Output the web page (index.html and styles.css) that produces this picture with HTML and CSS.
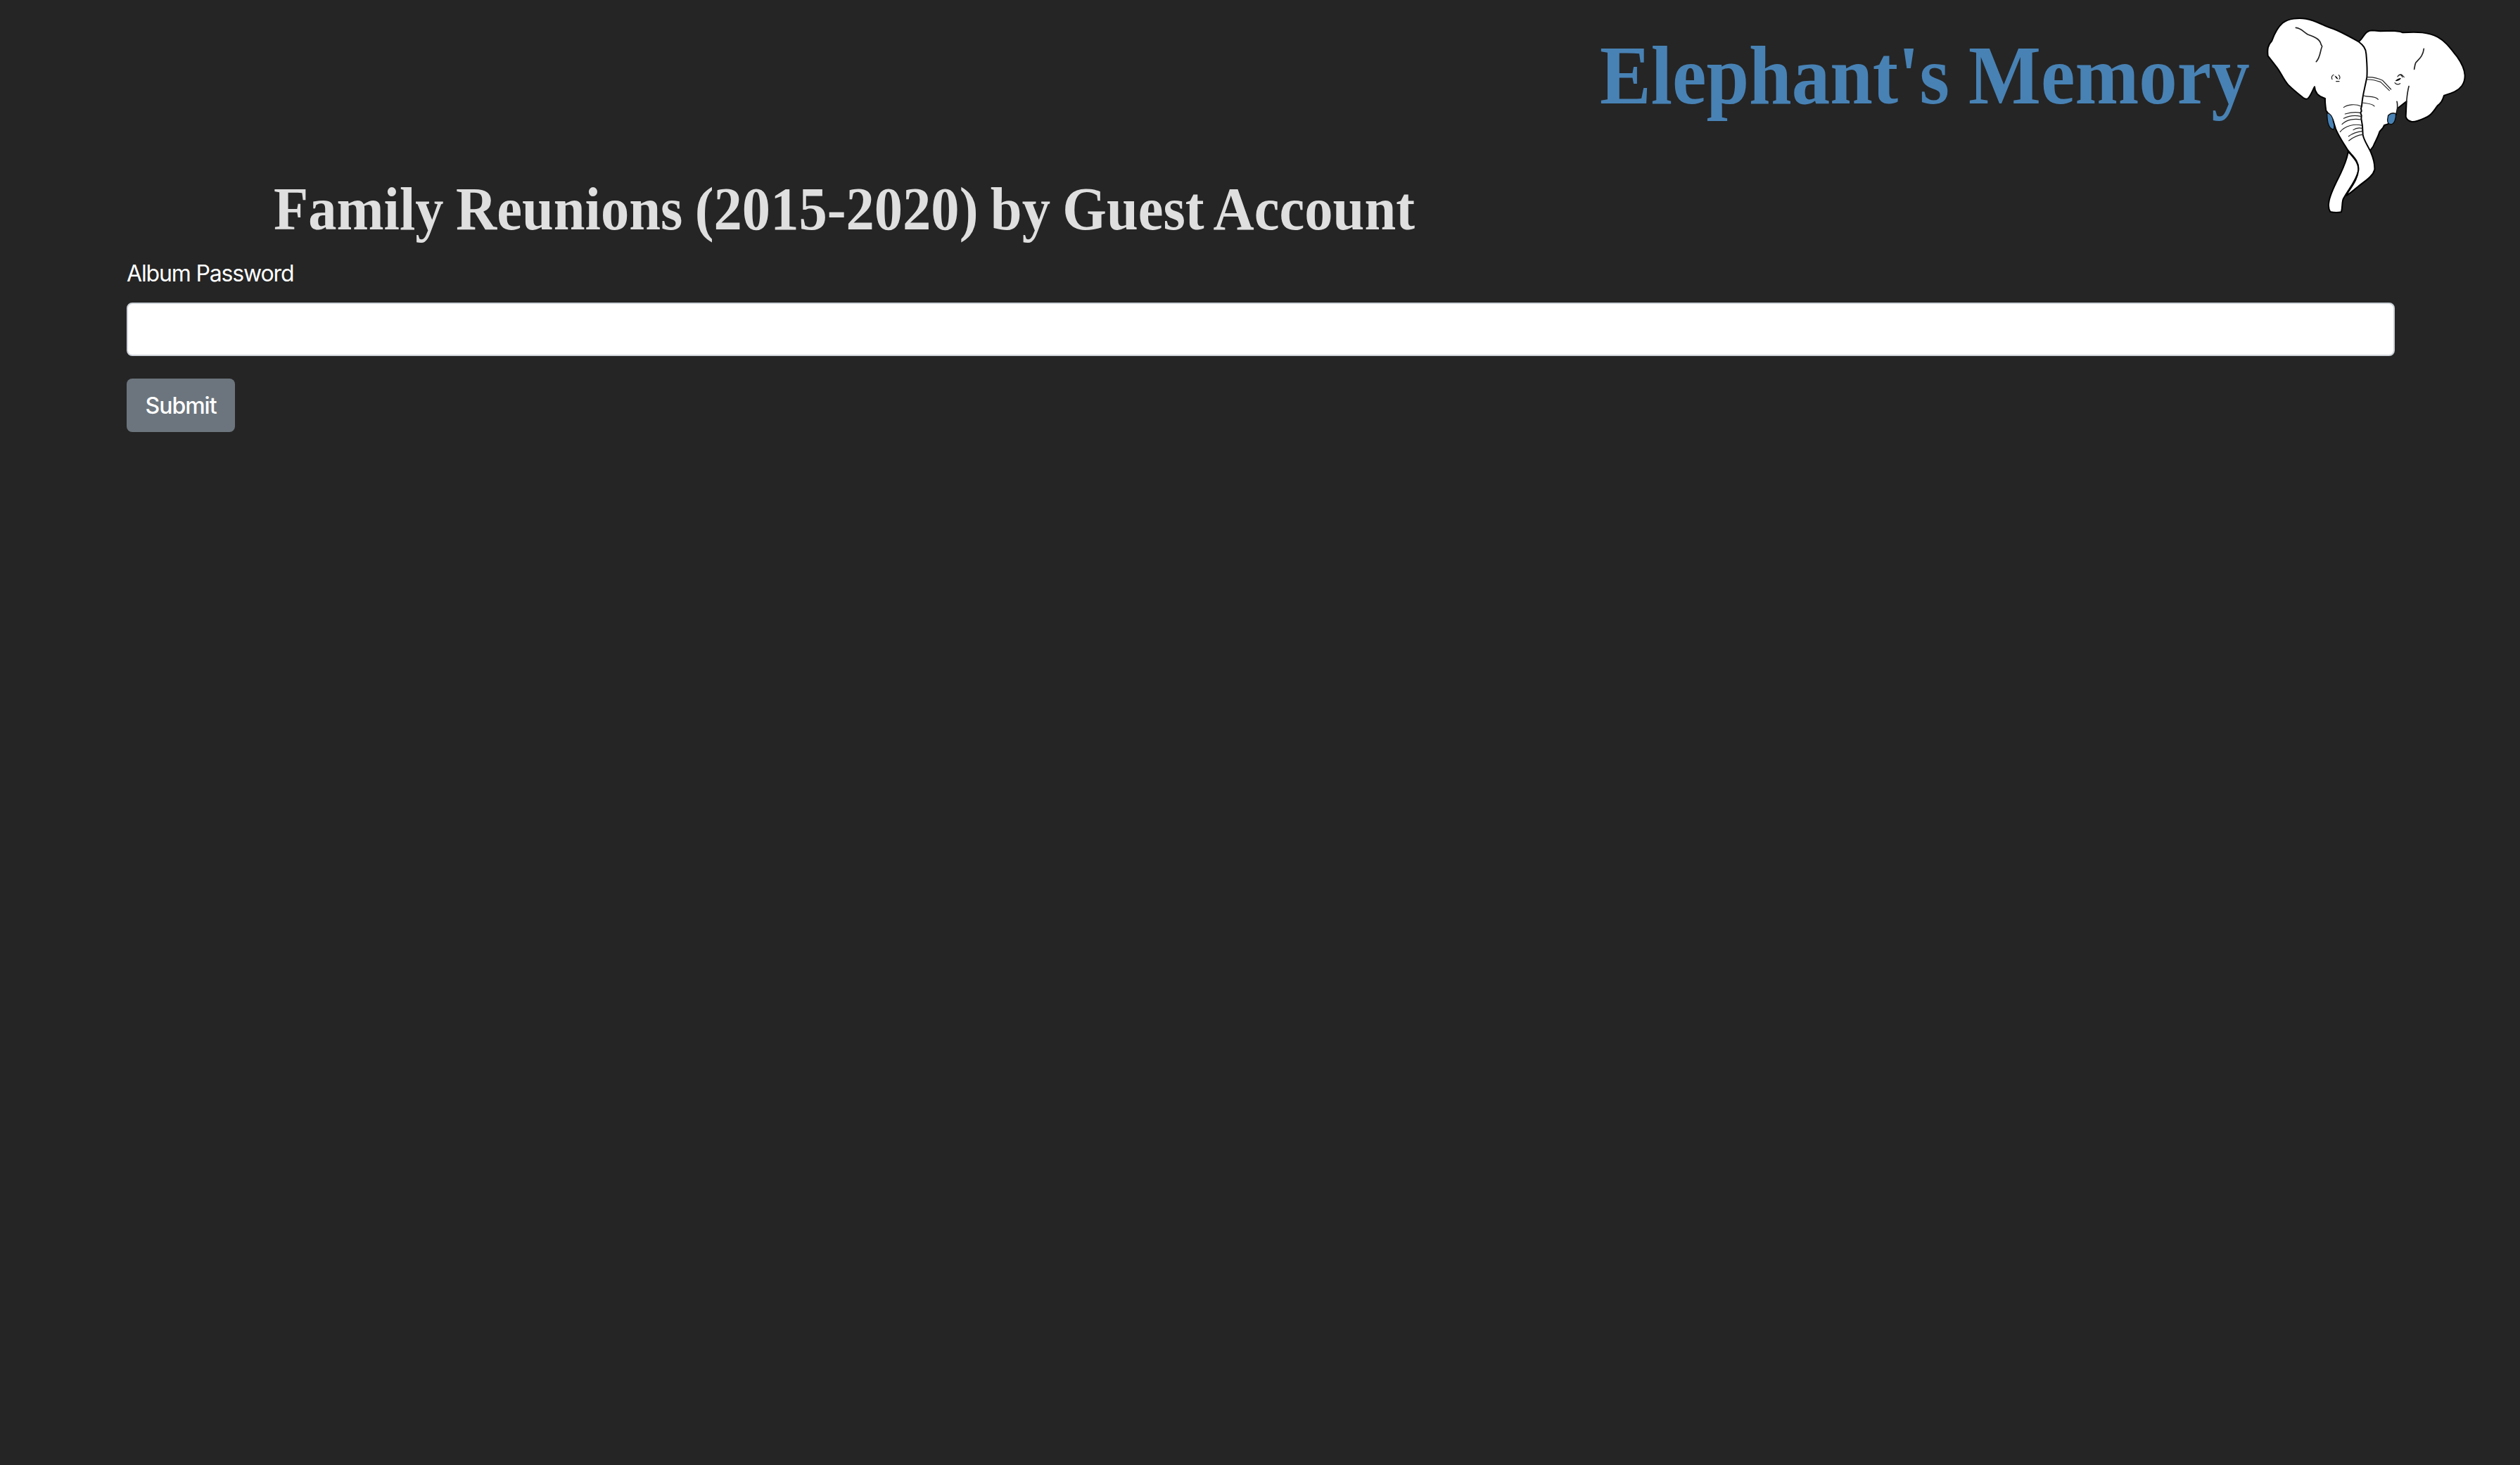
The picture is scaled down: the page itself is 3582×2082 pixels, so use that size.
FILE: index.html
```html
<!DOCTYPE html>
<html lang="en">
<head>
<meta charset="utf-8">
<title>Elephant's Memory</title>
<link rel="stylesheet" href="styles.css">
</head>
<body>
<header class="masthead">
  <div class="brand">Elephant's Memory</div>
  <svg class="logo" viewBox="0 0 930 900" aria-hidden="true">
    <g class="shape">
      <path d="M428 148C443 138 448 120 462 108Q472 100 488 100L520 103L575 101L606 105L616 109C680 105 725 107 765 128C800 147 822 180 848 212C868 240 880 265 881 292C881 312 879 322 868 336C850 360 825 367 792 377C785 400 780 408 764 421C750 440 740 459 721 468C700 477 675 491 655 489Q633 484 629 467L632 402L594 432L588 458L552 499L537 504C531 522 520 526 517 532C511 555 497 575 490 594L477 612L420 540L420 250Z"/>
      <path d="M496 693C488 725 450 744 426 765C406 780 391 796 373 804C396 770 423 735 427 696Z"/>
      <path d="M383 620C374 665 360 690 344 724C325 762 305 800 301 832C298 848 300 862 307 873Q330 878 354 874C360 850 356 830 363 817C385 775 420 739 427 696C431 665 405 642 383 615Z"/>
      <path d="M41 208C38 180 40 163 58 144C70 110 84 85 105 67C130 49 170 45 203 50C248 57 275 80 320 93C355 106 390 127 428 148C447 163 459 176 460 200C464 245 465 275 463 299C456 340 444 375 441 422L438 432L440 444L436 451L440 462L439 476L444 506L446 545C452 574 470 595 481 622C493 650 497 670 496 693C488 725 450 744 426 765C406 780 391 796 373 804C396 770 423 735 427 696C431 656 402 635 383 612C365 582 343 552 330 519L318 480L289 441C286 420 284 405 285 390C262 383 241 368 240 340C230 358 221 383 211 390Q203 395 192 387C165 366 145 349 128 332C108 311 96 277 76 253Z"/>
    </g>
    <g class="line">
      <path d="M160 88C185 91 190 105 211 117C235 126 262 134 267 158L272 168C264 184 265 215 247 233"/>
      <path d="M706 178C702 211 685 221 671 238C668 245 667 254 665 265"/>
      <path d="M642 338C635 364 634 385 632 405M591 403C595 414 593 421 592 455"/>
    </g>
    <g class="fine">
      <path d="M465 299C490 298 512 304 530 313L566 351M463 309C490 308 508 315 522 320L559 356"/>
      <path d="M448 376C452 386 499 376 511 394M444 408C463 411 489 412 495 423"/>
      <path d="M364 428C380 415 415 412 438 423M370 456C390 450 410 445 436 451M364 475C385 464 410 460 437 466M357 500C376 479 410 475 439 480M349 532C370 506 410 496 443 505M405 524C415 516 430 514 444 517M385 551C401 539 425 531 444 529M386 570C405 555 425 544 447 544"/>
      <path d="M321 289Q309 296 315 308M343 290Q351 298 346 307M332 317L345 317M594 297Q600 285 611 288L622 299M600 291Q609 286 615 299M582 323Q592 335 605 326"/>
    </g>
    <path class="eye" d="M325 292L334 297L342 309L332 304ZM584 315Q595 303 609 303Q603 314 588 316Z"/>
    <path class="tusk" d="M293 451C308 454 318 470 320 490Q327 510 321 522C300 520 293 487 293 451ZM554 462Q570 447 586 455C589 475 580 497 568 500Q550 501 551 480Z"/>
  </svg>
</header>
<main class="content">
  <h1 class="album-title">Family Reunions (2015-2020) by Guest Account</h1>
  <form class="form">
    <label class="label" for="password">Album Password</label>
    <input class="field" id="password" type="password">
    <button class="submit" type="button">Submit</button>
  </form>
</main>
</body>
</html>
```
FILE: styles.css
```css
* { box-sizing: border-box; }
body {
  margin: 0;
  min-height: 100vh;
  background: #252525;
  color: #fff;
  font: 32px/48px Inter, "Liberation Sans", sans-serif;
}
.masthead {
  display: flex;
  justify-content: flex-end;
  height: 245px;
  padding: 10px 62px 0 0;
}
.brand {
  margin: 33px 12px 0 0;
  color: #4882b5;
  font: bold 118px/130px "Liberation Serif", serif;
  white-space: nowrap;
  transform: scaleX(.924);
  transform-origin: right;
}
.logo { flex: none; width: 310px; height: 300px; }
.shape { fill: #fff; stroke: #000; stroke-width: 6; stroke-linejoin: round; }
.line, .fine { fill: none; stroke: #222; stroke-width: 5; stroke-linecap: round; }
.fine { stroke-width: 3.5; }
.eye { fill: #000; }
.tusk { fill: #4882b5; stroke: #0a0a0a; stroke-width: 4; }
.content { padding: 0 178px 0 180px; }
.album-title {
  width: max-content;
  margin: 0 0 16px 209px;
  color: #dfdfdf;
  font: bold 87px/104px "Liberation Serif", serif;
  word-spacing: -3px;
  transform: scaleX(.926);
  transform-origin: left;
}
.form { display: flex; flex-direction: column; align-items: flex-start; }
.label { margin-bottom: 17px; letter-spacing: -1.15px; }
.field {
  width: 100%;
  height: 76px;
  margin-bottom: 32px;
  padding: 12px 24px;
  border: 2px solid #ced4da;
  border-radius: 8px;
  background: #fff;
  font: inherit;
}
.submit {
  width: 154px;
  height: 76px;
  padding: 1px 0 0;
  border: 0;
  border-radius: 8px;
  background: #6c757d;
  color: #fff;
  font: 500 32px/48px Inter, "Liberation Sans", sans-serif;
  letter-spacing: -1px;
}
```
